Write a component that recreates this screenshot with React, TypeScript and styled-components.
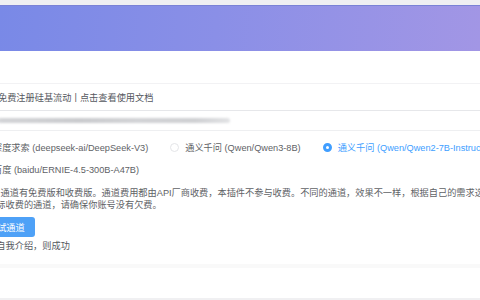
import React from "react";
import styled, { createGlobalStyle } from "styled-components";

const Global = createGlobalStyle`
  html, body { margin: 0; padding: 0; background: #ffffff; }
  body { width: 480px; height: 300px; overflow: hidden; font-family: "Liberation Sans", "Noto Sans CJK SC", sans-serif; }
`;

const Page = styled.div`
  width: 480px;
  height: 300px;
  overflow: hidden;
  display: flex;
  flex-direction: column;
  background: #fff;
`;

const TopStrip = styled.div`
  height: 5px;
  flex: none;
  background: #efeff2;
`;

const Banner = styled.div`
  height: 46px;
  flex: none;
  background: linear-gradient(95deg, #7989e7 0%, #8a8fe7 45%, #a296e5 100%);
  border-top: 1px solid #7a82d6;
  box-sizing: border-box;
`;

const Content = styled.div`
  margin-left: -22px;
  width: 640px;
  padding-top: 32px;
  display: flex;
  flex-direction: column;
  color: #606266;
  font-size: 9.2px;
`;

const NoticeRow = styled.div`
  height: 27px;
  display: flex;
  align-items: center;
  gap: 3px;
  border-top: 1px solid #f2f2f4;
  box-sizing: border-box;
  padding-left: 20px;
  color: #55585e;
`;

const KeyInput = styled.div`
  height: 21px;
  box-sizing: border-box;
  border-top: 1px solid #e6e7ea;
  border-bottom: 1px solid #eeeff1;
  display: flex;
  align-items: center;
  padding-left: 20px;
`;

const Blur = styled.div`
  width: 232px;
  height: 5px;
  border-radius: 3px;
  background: linear-gradient(90deg, #d3d4d7, #cacbce 35%, #d2d3d6 60%, #cfd0d3 85%, #e2e3e5);
  filter: blur(1px);
`;

const RadioGroup = styled.div`
  margin-top: 5px;
  display: flex;
  flex-wrap: wrap;
  width: 540px;
`;

const RadioItem = styled.label<{ $checked?: boolean }>`
  height: 22px;
  display: flex;
  align-items: center;
  gap: 6px;
  margin-right: 22px;
  white-space: nowrap;
  color: ${(p) => (p.$checked ? "#409eff" : "#606266")};
`;

const Circle = styled.span<{ $checked?: boolean }>`
  width: 9px;
  height: 9px;
  box-sizing: border-box;
  border-radius: 50%;
  flex: none;
  border: ${(p) => (p.$checked ? "3px solid #409eff" : "1px solid #e4e5e8")};
  background: #fff;
`;

const Tip = styled.p`
  margin: 8px 0 0 0;
  line-height: 11.5px;
  width: 640px;
  text-indent: -5px;
  color: #606266;
`;

const TestButton = styled.button`
  margin-top: 6px;
  align-self: flex-start;
  height: 20px;
  padding: 0 10px;
  border: none;
  border-radius: 3px;
  background: #4ea1f7;
  color: #fff;
  font-family: inherit;
  font-size: 9.2px;
`;

const Result = styled.div`
  margin-top: 3px;
  line-height: 12px;
  color: #55585e;
`;

const Divider = styled.div`
  margin-top: 12px;
  height: 4px;
  background: #f9f9f9;
  width: 480px;
  margin-left: 22px;
`;

const Footer = styled.div`
  margin-top: auto;
  height: 2px;
  flex: none;
  background: #f0f0f2;
`;

const models = [
  { label: "深度求索 (deepseek-ai/DeepSeek-V3)", checked: false },
  { label: "通义千问 (Qwen/Qwen3-8B)", checked: false },
  { label: "通义千问 (Qwen/Qwen2-7B-Instruct)", checked: true },
  { label: "百度 (baidu/ERNIE-4.5-300B-A47B)", checked: false },
];

export default function App() {
  return (
    <>
      <Global />
      <Page>
        <TopStrip />
        <Banner />
        <Content>
          <NoticeRow>
            <span>免费注册硅基流动</span>
            <span>|</span>
            <span>点击查看使用文档</span>
          </NoticeRow>
          <KeyInput>
            <Blur />
          </KeyInput>
          <RadioGroup>
            {models.map((m) => (
              <RadioItem key={m.label} $checked={m.checked}>
                <Circle $checked={m.checked} />
                {m.label}
              </RadioItem>
            ))}
          </RadioGroup>
          <Tip>
            提示：通道有免费版和收费版。通道费用都由API厂商收费，本插件不参与收费。不同的通道，效果不一样，根据自己的需求选择。
            <br />
            用实际收费的通道，请确保你账号没有欠费。
          </Tip>
          <TestButton>测试通道</TestButton>
          <Result>回复自我介绍，则成功</Result>
          <Divider />
        </Content>
        <Footer />
      </Page>
    </>
  );
}
